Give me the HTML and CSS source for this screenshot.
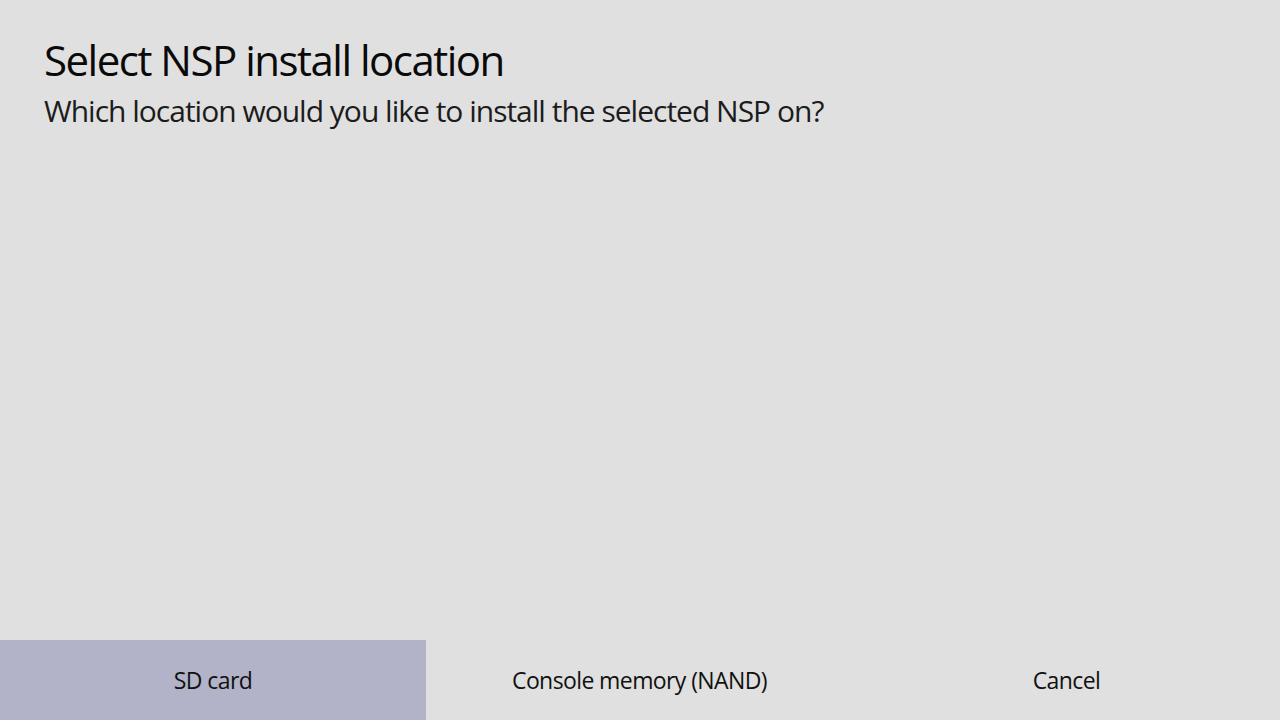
FILE: index.html
```html
<!DOCTYPE html>
<html>
<head>
<meta charset="utf-8">
<link rel="stylesheet" href="styles.css">
</head>
<body>
<div class="screen">
  <header class="head">
    <h1 class="title">Select NSP install location</h1>
    <p class="subtitle">Which location would you like to install the selected NSP on?</p>
  </header>
  <div class="options">
    <div class="option selected">SD card</div>
    <div class="option">Console memory (NAND)</div>
    <div class="option">Cancel</div>
  </div>
</div>
</body>
</html>
```
FILE: styles.css
```css
html, body {
  margin: 0;
  padding: 0;
}
body {
  background: #e0e0e0;
  font-family: "Open Sans", "Noto Sans", sans-serif;
  color: #111;
}
.screen {
  width: 1280px;
  height: 720px;
  display: flex;
  flex-direction: column;
  justify-content: space-between;
}
.head {
  padding: 35px 44px 0;
}
.title {
  margin: 0;
  font-size: 42px;
  font-weight: 400;
  line-height: 50px;
  letter-spacing: -1.5px;
  color: #0a0a0a;
}
.subtitle {
  margin: 6px 0 0;
  font-size: 30px;
  line-height: 40px;
  letter-spacing: -1px;
  color: #1c1c1c;
}
.options {
  display: grid;
  grid-template-columns: 426px 427px 427px;
  height: 80px;
}
.option {
  display: flex;
  align-items: center;
  justify-content: center;
  font-size: 23px;
  letter-spacing: -0.6px;
  color: #111;
}
.option.selected {
  background: #b2b3c8;
}
```
